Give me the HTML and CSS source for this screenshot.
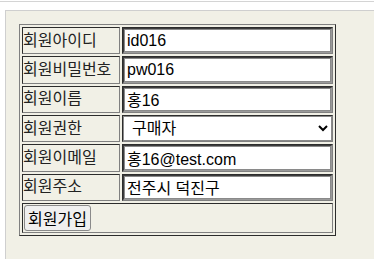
FILE: index.html
```html
<!DOCTYPE html>
<html lang="ko">
<head>
  <meta charset="UTF-8" />
  <title>회원가입</title>
  <link rel="stylesheet" href="styles.css">
</head>
<body>

  <div class="topline"></div>

  <div class="panel">
    <form>
      <table class="join-table">
        <tr>
          <td class="label">회원아이디</td>
          <td class="field"><input type="text" name="id" value="id016" /></td>
        </tr>
        <tr>
          <td class="label">회원비밀번호</td>
          <td class="field"><input type="text" name="pw" value="pw016" /></td>
        </tr>
        <tr>
          <td class="label">회원이름</td>
          <td class="field"><input type="text" name="name" value="홍16" /></td>
        </tr>
        <tr>
          <td class="label">회원권한</td>
          <td class="field">
            <select name="level">
              <option>구매자</option>
              <option>판매자</option>
              <option>관리자</option>
            </select>
          </td>
        </tr>
        <tr>
          <td class="label">회원이메일</td>
          <td class="field"><input type="text" name="email" value="홍16@test.com" /></td>
        </tr>
        <tr>
          <td class="label">회원주소</td>
          <td class="field"><input type="text" name="addr" value="전주시 덕진구" /></td>
        </tr>
        <tr>
          <td class="submit-cell" colspan="2"><button type="button">회원가입</button></td>
        </tr>
      </table>
    </form>
  </div>

</body>
</html>
```

FILE: styles.css
```css
body {
  margin: 0;
  font-family: "Liberation Sans", "Noto Sans CJK KR", sans-serif;
  font-size: 16px;
  background-color: #fff;
}
.topline {
  margin-top: 1px;
  border-top: 1px solid #d4d4d4;
}
.panel {
  margin: 8px 0 0 5px;
  border-top: 1px solid #cfcfcf;
  border-left: 1px solid #cfcfcf;
  background-color: #f1f0e6;
  padding: 13px;
  height: 222px;
}
.join-table {
  border: 1px outset gray;
  border-spacing: 2px;
}
.join-table td {
  border: 1px inset gray;
  padding: 0;
  line-height: 20px;
}
.label {
  width: 96px;
  padding: 0 1px;
  color: #222;
  white-space: nowrap;
}
.field {
  width: 209px;
}
.field input,
.field select {
  box-sizing: border-box;
  display: block;
  width: 209px;
  height: 25.33px;
  margin: 0;
  padding: 1px 3px;
  font-family: "Liberation Sans", "Noto Sans CJK KR", sans-serif;
  font-size: 16px;
  color: #000;
  background-color: #fff;
  border: 1px solid;
  border-color: #3c3c3c #9a9a9a #9a9a9a #3c3c3c;
  box-shadow: inset 1px 1px 0 #8a8a8a, inset -1px -1px 0 #8a8a8a;
}
.field select {
  padding: 0 2px 0 4px;
  border: 1px solid #8a8a8a;
  box-shadow: none;
}
.join-table td.submit-cell {
  padding: 1px;
}
.submit-cell button {
  height: 26px;
  padding: 0 3px;
  margin: 0;
  font-family: "Liberation Sans", "Noto Sans CJK KR", sans-serif;
  font-size: 16px;
  color: #000;
  background-color: #efefef;
  border: 1px solid #8a8a8a;
  border-radius: 3px;
}
```
